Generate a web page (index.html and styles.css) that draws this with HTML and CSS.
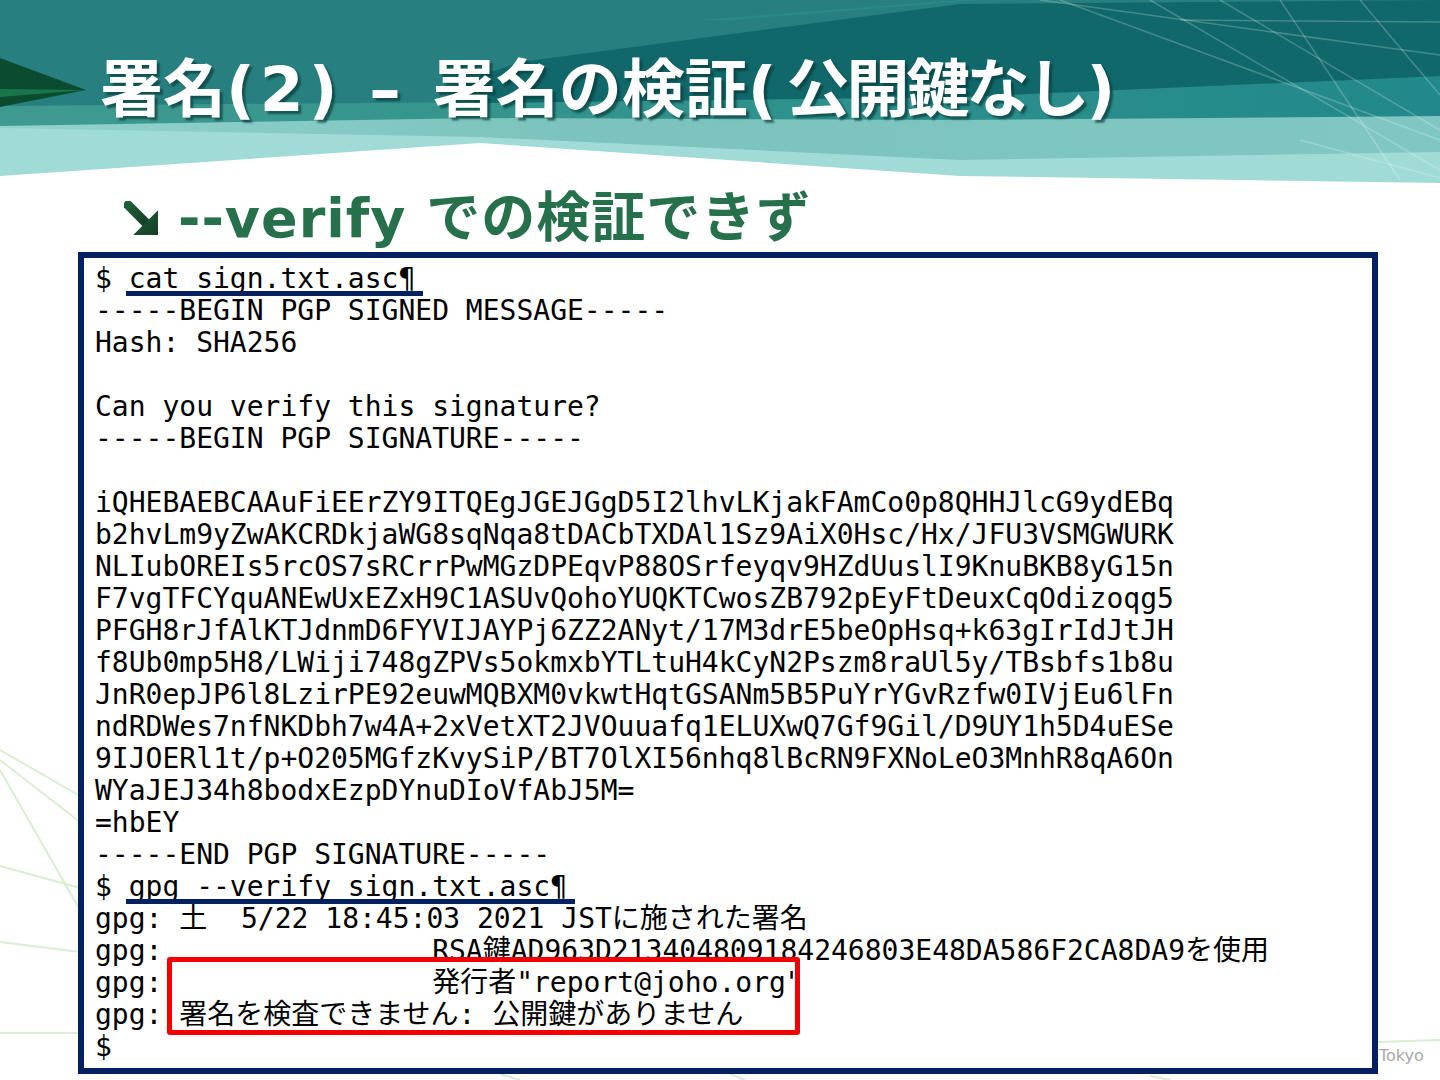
FILE: index.html
```html
<!DOCTYPE html>
<html lang="ja">
<head>
    <meta charset="UTF-8">
    <meta name="viewport" content="width=device-width, initial-scale=1.0">
    <title>署名(2) – 署名の検証(公開鍵なし)</title>
    <link rel="stylesheet" href="styles.css">
</head>
<body>
    <div class="slide">
        <svg class="deco" width="1440" height="1080" viewBox="0 0 1440 1080">
            <g stroke="#d9eed3" stroke-width="2" fill="none">
                <line x1="0" y1="750" x2="80" y2="796"/>
                <line x1="0" y1="760" x2="80" y2="822"/>
                <line x1="0" y1="770" x2="80" y2="910"/>
                <line x1="0" y1="866" x2="80" y2="888"/>
                <line x1="0" y1="942" x2="80" y2="952"/>
                <line x1="0" y1="1033" x2="80" y2="1033"/>
                <line x1="1378" y1="1042" x2="1440" y2="1040"/>
                <line x1="500" y1="1074" x2="520" y2="1080"/>
                <line x1="730" y1="1074" x2="745" y2="1080"/>
                <line x1="1150" y1="1076" x2="1170" y2="1080"/>
            </g>
        </svg>

        <header class="banner">
            <svg class="banner-bg" width="1440" height="185" viewBox="0 0 1440 185">
                <defs>
                    <linearGradient id="mid" x1="0" x2="1" y1="0" y2="0">
                        <stop offset="0" stop-color="#3f9b8f"/>
                        <stop offset="0.5" stop-color="#2f928c"/>
                        <stop offset="1" stop-color="#22888b"/>
                    </linearGradient>
                    <linearGradient id="light" x1="0" x2="1" y1="0" y2="0">
                        <stop offset="0" stop-color="#92d2cd"/>
                        <stop offset="0.4" stop-color="#7bc3bc"/>
                        <stop offset="1" stop-color="#80c7c2"/>
                    </linearGradient>
                </defs>
                <polygon fill="#a0dbd8" points="0,0 1440,0 1440,183 960,176 480,143 0,176"/>
                <polygon fill="url(#light)" points="0,0 1440,0 1440,152 960,160 480,137 0,128"/>
                <polygon fill="url(#mid)" points="0,0 1440,0 1440,116 960,120 480,118 0,126"/>
                <polygon fill="#27807f" points="0,0 1440,0 1440,76 960,97 480,102 0,106"/>
                <polygon fill="#10686a" points="520,62 960,4 1440,0 1440,76 960,97 480,103 440,90"/>
                <polygon fill="#2a8a88" points="700,20 960,0 980,0 730,20"/>
                <g stroke="#ffffff" stroke-opacity="0.22" stroke-width="1.5" fill="none">
                    <line x1="1040" y1="0" x2="1440" y2="55"/>
                    <line x1="1060" y1="0" x2="1440" y2="140"/>
                    <line x1="1150" y1="0" x2="1440" y2="170"/>
                    <line x1="1220" y1="0" x2="1440" y2="130"/>
                    <line x1="1280" y1="0" x2="1400" y2="180"/>
                    <line x1="1360" y1="0" x2="1440" y2="95"/>
                    <line x1="1180" y1="20" x2="1440" y2="22"/>
                    <line x1="1300" y1="140" x2="1440" y2="178"/>
                </g>
                <polygon fill="#0b4c30" points="0,58 86,90 0,107"/>
                <polygon fill="#17774a" points="0,89 86,90 0,97"/>
            </svg>
            <h1 class="title">署名<span class="lat">(2) – </span>署名の検証<span class="lp">(</span><span class="kk">公開鍵なし</span>)</h1>
        </header>

        <div class="subtitle">
            <svg class="arrow" width="35" height="35" viewBox="0 0 34 34">
                <defs>
                    <linearGradient id="arw" x1="0" y1="0" x2="1" y2="1">
                        <stop offset="0" stop-color="#1f5e39"/>
                        <stop offset="1" stop-color="#163f28"/>
                    </linearGradient>
                </defs>
                <line x1="4" y1="4" x2="21" y2="21" stroke="url(#arw)" stroke-width="9" stroke-linecap="square"/>
                <polygon fill="url(#arw)" points="33,9 33,33 9,33"/>
            </svg>
            <span class="sub-text">--verify での検証できず</span>
        </div>

        <div class="terminal">
<pre class="screen">$ <span class="cmd">cat sign.txt.asc¶</span>
-----BEGIN PGP SIGNED MESSAGE-----
Hash: SHA256

Can you verify this signature?
-----BEGIN PGP SIGNATURE-----

iQHEBAEBCAAuFiEErZY9ITQEgJGEJGgD5I2lhvLKjakFAmCo0p8QHHJlcG9ydEBq
b2hvLm9yZwAKCRDkjaWG8sqNqa8tDACbTXDAl1Sz9AiX0Hsc/Hx/JFU3VSMGWURK
NLIubOREIs5rcOS7sRCrrPwMGzDPEqvP88OSrfeyqv9HZdUuslI9KnuBKB8yG15n
F7vgTFCYquANEwUxEZxH9C1ASUvQohoYUQKTCwosZB792pEyFtDeuxCqOdizoqg5
PFGH8rJfAlKTJdnmD6FYVIJAYPj6ZZ2ANyt/17M3drE5beOpHsq+k63gIrIdJtJH
f8Ub0mp5H8/LWiji748gZPVs5okmxbYTLtuH4kCyN2Pszm8raUl5y/TBsbfs1b8u
JnR0epJP6l8LzirPE92euwMQBXM0vkwtHqtGSANm5B5PuYrYGvRzfw0IVjEu6lFn
ndRDWes7nfNKDbh7w4A+2xVetXT2JVOuuafq1ELUXwQ7Gf9Gil/D9UY1h5D4uESe
9IJOERl1t/p+O205MGfzKvySiP/BT7OlXI56nhq8lBcRN9FXNoLeO3MnhR8qA6On
WYaJEJ34h8bodxEzpDYnuDIoVfAbJ5M=
=hbEY
-----END PGP SIGNATURE-----
$ <span class="cmd">gpg --verify sign.txt.asc¶</span>
gpg: 土  5/22 18:45:03 2021 JSTに施された署名
gpg:                RSA鍵AD963D213404809184246803E48DA586F2CA8DA9を使用
gpg:                発行者"report@joho.org"
gpg: 署名を検査できません: 公開鍵がありません
$</pre>
            <div class="highlight"></div>
        </div>

        <div class="footer-text">Tokyo</div>
    </div>
</body>
</html>
```

FILE: styles.css
```css
body {
    margin: 0;
    padding: 0;
    background: #fff;
}

.slide {
    position: relative;
    width: 1440px;
    height: 1080px;
    overflow: hidden;
    background: #fff;
}

.deco {
    position: absolute;
    left: 0;
    top: 0;
}

.banner {
    position: relative;
    height: 180px;
}

.banner-bg {
    position: absolute;
    left: 0;
    top: 0;
}

.title {
    position: relative;
    margin: 0;
    padding: 50px 0 0 100px;
    font-family: "DejaVu Sans", "Noto Sans CJK JP", sans-serif;
    font-size: 63px;
    font-weight: 700;
    line-height: 80px;
    color: #fff;
    text-shadow: 3px 3px 2px rgba(10, 60, 60, 0.7);
    white-space: pre;
}

.title .lat {
    letter-spacing: 5px;
}

.title .lp {
    letter-spacing: 10px;
}

.title .kk {
    letter-spacing: -3px;
}

.subtitle {
    position: relative;
    display: flex;
    align-items: center;
    gap: 19px;
    height: 66px;
    padding: 0 0 6px 124px;
}

.arrow {
    margin-top: 10px;
}

.sub-text {
    font-family: "DejaVu Sans", "Noto Sans CJK JP", sans-serif;
    font-size: 54px;
    font-weight: 700;
    color: #26704b;
    letter-spacing: 1px;
    white-space: pre;
}

.terminal {
    position: relative;
    margin-left: 78px;
    width: 1300px;
    height: 822px;
    box-sizing: border-box;
    border: 6px solid #03215f;
    background: #fff;
    padding: 5px 0 0 11px;
}

.screen {
    margin: 0;
    font-family: "DejaVu Sans Mono", "Noto Sans CJK JP", monospace;
    font-size: 28px;
    line-height: 32px;
    color: #000;
}

.cmd {
    position: relative;
}

.cmd::after {
    content: "";
    position: absolute;
    left: -3px;
    right: -8px;
    top: 29px;
    height: 5px;
    background: #03215f;
}

.highlight {
    position: absolute;
    left: 83px;
    top: 699px;
    width: 633px;
    height: 78px;
    box-sizing: border-box;
    border: 5px solid #f50000;
    border-radius: 3px;
}

.footer-text {
    position: absolute;
    left: 1379px;
    top: 1046px;
    font-family: "DejaVu Sans", sans-serif;
    font-size: 16px;
    color: #a9a9a9;
}
```
